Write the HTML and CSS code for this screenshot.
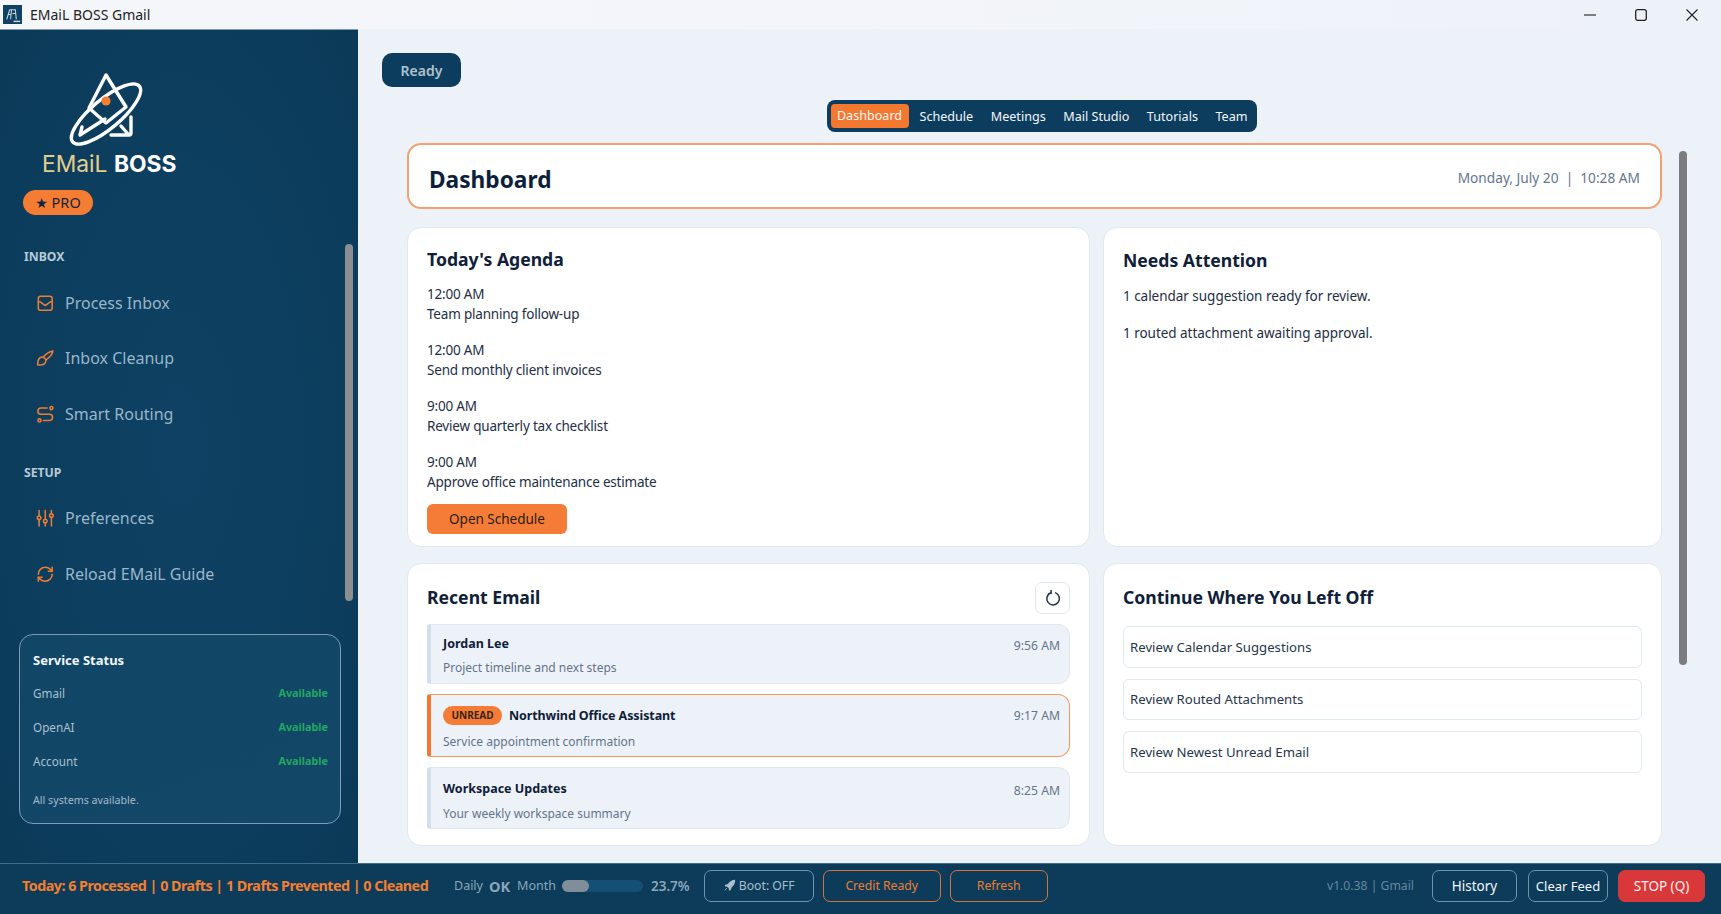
FILE: index.html
```html
<!DOCTYPE html>
<html lang="en">
<head>
<meta charset="utf-8">
<title>EMaiL BOSS Gmail</title>
<link rel="stylesheet" href="styles.css">
</head>
<body>
<header class="titlebar">
  <svg class="app-icon" viewBox="0 0 20 20"><rect width="20" height="20" fill="#0f4364"/><path d="M7 5 4 15M9 5l-1 10M7 5h6l1 10M10 9h3M5 10h4" fill="none" stroke="#c9d6df" stroke-width="1.1"/><rect x="11" y="16.5" width="7" height="1.5" fill="#c9d6df"/></svg>
  <span class="app-title">EMaiL BOSS Gmail</span>
  <div class="win-controls">
    <svg viewBox="0 0 12 12"><path d="M0 6h12" stroke="#333" stroke-width="1.2"/></svg>
    <svg viewBox="0 0 12 12"><rect x=".7" y=".7" width="10.6" height="10.6" rx="2" fill="none" stroke="#222" stroke-width="1.3"/></svg>
    <svg viewBox="0 0 12 12"><path d="M.5.5l11 11M11.5.5l-11 11" stroke="#222" stroke-width="1.1"/></svg>
  </div>
</header>

<div class="app">
  <aside class="sidebar">
    <div class="brand">
      <svg class="logo" viewBox="0 0 90 78" fill="none" stroke="#fff" stroke-width="3.4" stroke-linejoin="round" stroke-linecap="round">
        <path d="M47 3 30 36 47 51 67 35Z"/>
        <ellipse cx="47" cy="42" rx="43.5" ry="14.5" transform="rotate(-40 47 42)"/>
        <path d="M72 45v16a2 2 0 0 1-2 2H52M62 54l7 8M21 63 46 47M21 63l2-8"/>
        <circle cx="47" cy="29" r="4.6" fill="#f47f2f" stroke="none"/>
      </svg>
      <div class="wordmark"><span class="gold">EMaiL</span> <b>BOSS</b></div>
      <div class="pro"><span class="star">★</span> PRO</div>
    </div>

    <div class="group-label group-inbox">INBOX</div>
    <a class="nav-item"><svg viewBox="0 0 24 24"><rect x="3" y="3" width="18" height="18" rx="3"/><path d="M3 10h2l7 5 7-5h2"/></svg>Process Inbox</a>
    <a class="nav-item"><svg viewBox="0 0 24 24"><path d="M22 2.500c-5.500 1-9.500 4-12.500 8l3.500 3.500c4-2.500 8-6 9-11.500Z"/><path d="M9.500 10.500c-3-.5-5.500 1-6.500 4-.5 1.500-.5 3-1 6 3 .5 9 .5 10.500-4 .3-1 .5-1.500.5-2.500"/></svg>Inbox Cleanup</a>
    <a class="nav-item"><svg viewBox="0 0 24 24"><circle cx="4.500" cy="20" r="2"/><path d="M9.500 20h8a4 4 0 0 0 0-8h-11a4 4 0 0 1 0-8h8"/><circle cx="20" cy="4" r="2"/></svg>Smart Routing</a>

    <div class="group-label group-setup">SETUP</div>
    <a class="nav-item"><svg viewBox="0 0 24 24"><path d="M4 2v7M4 14v8M12 2v11M12 18v4M20 2v4M20 11v11"/><circle cx="4" cy="11.500" r="2.300"/><circle cx="12" cy="15.500" r="2.300"/><circle cx="20" cy="8.500" r="2.300"/></svg>Preferences</a>
    <a class="nav-item"><svg viewBox="0 0 24 24"><path d="M3 12a9 9 0 0 1 9-9 9.750 9.750 0 0 1 6.740 2.740L21 8"/><path d="M21 3v5h-5"/><path d="M21 12a9 9 0 0 1-9 9 9.750 9.750 0 0 1-6.740-2.740L3 16"/><path d="M8 16H3v5"/></svg>Reload EMaiL Guide</a>

    <section class="status">
      <h3>Service Status</h3>
      <div class="status-row"><span>Gmail</span><b>Available</b></div>
      <div class="status-row"><span>OpenAI</span><b>Available</b></div>
      <div class="status-row"><span>Account</span><b>Available</b></div>
      <p>All systems available.</p>
    </section>
    <div class="side-thumb"></div>
  </aside>

  <main class="main">
    <div class="ready">Ready</div>
    <div class="tabs-wrap">
      <nav class="tabs">
        <span class="tab active">Dashboard</span>
        <span class="tab">Schedule</span>
        <span class="tab">Meetings</span>
        <span class="tab">Mail Studio</span>
        <span class="tab">Tutorials</span>
        <span class="tab">Team</span>
      </nav>
    </div>

    <section class="page-head">
      <h1>Dashboard</h1>
      <span class="date">Monday, July 20 &nbsp;|&nbsp; 10:28 AM</span>
    </section>

    <div class="grid">
      <section class="card">
        <h2 class="agenda-title">Today's Agenda</h2>
        <div class="agenda-item"><div>12:00 AM</div><div>Team planning follow-up</div></div>
        <div class="agenda-item"><div>12:00 AM</div><div>Send monthly client invoices</div></div>
        <div class="agenda-item"><div>9:00 AM</div><div>Review quarterly tax checklist</div></div>
        <div class="agenda-item"><div>9:00 AM</div><div>Approve office maintenance estimate</div></div>
        <button class="open-btn">Open Schedule</button>
      </section>

      <section class="card">
        <h2 class="attention-title">Needs Attention</h2>
        <p class="note">1 calendar suggestion ready for review.</p>
        <p class="note">1 routed attachment awaiting approval.</p>
      </section>

      <section class="card card-mail">
        <div class="card-head">
          <h2>Recent Email</h2>
          <button class="icon-btn"><svg viewBox="0 0 20 20"><path d="M7.500 4.200a7 7 0 1 0 5.500.1M7.800 1.800 8 4.600l-2.800.6" fill="none" stroke="#24344a" stroke-width="1.700" stroke-linecap="round"/></svg></button>
        </div>
        <article class="mail mail-first">
          <div class="mail-top"><b>Jordan Lee</b><time>9:56 AM</time></div>
          <div class="mail-sub">Project timeline and next steps</div>
        </article>
        <article class="mail unread">
          <div class="mail-top"><span class="badge">UNREAD</span><b>Northwind Office Assistant</b><time>9:17 AM</time></div>
          <div class="mail-sub">Service appointment confirmation</div>
        </article>
        <article class="mail mail-last">
          <div class="mail-top"><b>Workspace Updates</b><time>8:25 AM</time></div>
          <div class="mail-sub">Your weekly workspace summary</div>
        </article>
      </section>

      <section class="card card-mail">
        <h2 class="continue-title">Continue Where You Left Off</h2>
        <a class="resume">Review Calendar Suggestions</a>
        <a class="resume">Review Routed Attachments</a>
        <a class="resume">Review Newest Unread Email</a>
      </section>
    </div>
    <div class="main-thumb"></div>
  </main>
</div>

<footer class="footer">
  <strong class="today">Today: 6 Processed | 0 Drafts | 1 Drafts Prevented | 0 Cleaned</strong>
  <span class="muted daily">Daily</span><b class="muted ok">OK</b><span class="muted month">Month</span>
  <div class="bar"><div class="bar-fill" style="width:33%"></div></div>
  <span class="pct">23.7%</span>
  <button class="fbtn boot"><svg viewBox="0 0 16 16"><path d="M15 1c-4 .2-7 2-9 5L3 7l-1 2 3 .5 2 2 .5 3 2-1 1-3c3-2 4.700-5.500 4.500-9.500ZM4 11l-2.500 3.500L5 12Z" fill="#a9bfcd"/></svg>Boot: OFF</button>
  <button class="fbtn credit">Credit Ready</button>
  <button class="fbtn refresh">Refresh</button>
  <span class="version">v1.0.38 | Gmail</span>
  <button class="fbtn history">History</button>
  <button class="fbtn clear">Clear Feed</button>
  <button class="fbtn stop">STOP (Q)</button>
</footer>
</body>
</html>
```
FILE: styles.css
```css
* { box-sizing: border-box; }
html, body { height: 100%; }
body {
  margin: 0;
  height: 914px;
  overflow: hidden;
  display: flex;
  flex-direction: column;
  font-family: "Noto Sans", "Open Sans", sans-serif;
  background: #edf2f8;
  color: #0f2038;
}
h1, h2, h3, p { margin: 0; }
button { font-family: inherit; cursor: pointer; }

/* title bar */
.titlebar {
  height: 29px;
  flex: none;
  display: flex;
  align-items: center;
  padding-left: 3px;
  background: linear-gradient(90deg, #f5f6fa 0%, #f3f5fa 50%, #edf2f8 100%);
}
.app-icon { width: 19px; height: 19px; flex: none; }
.app-title { margin-left: 8px; font-size: 14px; color: #222; }
.win-controls { margin-left: auto; margin-right: 23px; display: flex; gap: 39px; }
.win-controls svg { width: 12px; height: 12px; display: block; }

.app { flex: 1; display: flex; min-height: 0; }

/* sidebar */
.sidebar {
  position: relative;
  width: 358px;
  flex: none;
  display: flex;
  flex-direction: column;
  background: radial-gradient(ellipse at 50% 50%, #0e4163 0%, #0c3d5d 70%, #0b3958 100%);
  border-top: 1px solid #7f98aa;
}
.brand { padding: 42px 0 0 23px; height: 195px; }
.logo { display: block; width: 90px; height: 78px; margin-left: 36px; }
.wordmark { margin: 0 0 0 19px; font-family: Inter, sans-serif; font-size: 22.8px; line-height: 27px; white-space: nowrap; color: #fff; }
.wordmark .gold { color: #e4cd8d; font-weight: 400; }
.wordmark b { font-weight: 700; }
.pro {
  width: 70px;
  height: 25px;
  margin-top: 13px;
  border-radius: 13px;
  background: #f47c33;
  color: #14233f;
  font-size: 14.5px;
  line-height: 25px;
  text-align: center;
}
.star { font-family: "DejaVu Sans", sans-serif; font-size: 14px; }
.group-label { margin-left: 24px; font-size: 12.200px; font-weight: 700; line-height: 16px; color: #b6cbd8; }
.group-inbox { margin-top: 24px; margin-bottom: 10px; }
.group-setup { margin-top: 23px; margin-bottom: 10px; }
.nav-item {
  height: 55.500px;
  display: flex;
  align-items: center;
  gap: 10.500px;
  padding-left: 36px;
  font-size: 16px;
  color: #9ab6c9;
}
.nav-item svg {
  width: 18.500px;
  height: 18.500px;
  fill: none;
  stroke: #ee7c30;
  stroke-width: 2;
  stroke-linecap: round;
  stroke-linejoin: round;
  flex: none;
}
.status {
  margin: auto 17px 39px 19px;
  height: 190px;
  padding: 15px 12px 0 13px;
  border: 1.500px solid #7c9cb2;
  border-radius: 14px;
  background: linear-gradient(160deg, #114667, #134768);
}
.status h3 { font-size: 13px; font-weight: 700; line-height: 20px; color: #f2f6f9; margin-bottom: 13px; }
.status-row { display: flex; justify-content: space-between; height: 34px; font-size: 11.700px; line-height: 20px; color: #a9c0ce; }
.status-row b { color: #22a860; font-size: 10.800px; font-weight: 700; }
.status p { margin-top: 5px; font-size: 10.700px; line-height: 20px; color: #a3bac9; }
.side-thumb { position: absolute; left: 345px; top: 214px; width: 8px; height: 357px; border-radius: 4px; background: #8b8f92; }

/* main */
.main { position: relative; flex: 1; min-width: 0; padding: 24px 0 0 24px; }
.ready {
  width: 79px;
  height: 34px;
  border-radius: 10px;
  background: #0d3d5e;
  color: #abc3d2;
  font-size: 14px;
  font-weight: 600;
  line-height: 35px;
  text-align: center;
}
.tabs-wrap { display: flex; justify-content: center; margin-top: 13px; padding-right: 20px; }
.tabs {
  height: 32px;
  width: 430px;
  display: flex;
  align-items: center;
  gap: 17.500px;
  padding: 0 4px;
  border-radius: 8px;
  background: #0d3d5e;
}
.tab { font-size: 12.600px; color: #f2f6fa; white-space: nowrap; }
.tab.active { width: 78px; height: 24px; margin-right: -6.500px; line-height: 24px; text-align: center; border-radius: 4px; background: #f4782f; }
.page-head {
  width: 1255px;
  height: 66px;
  margin: 11px 0 0 25px;
  padding: 3px 20px 0 20px;
  display: flex;
  align-items: center;
  justify-content: space-between;
  background: #fff;
  border: 2px solid #f6a072;
  border-radius: 14px;
}
.page-head h1 { margin-top: 4px; font-size: 22.700px; font-weight: 700; color: #0d1f3a; }
.date { font-size: 13.700px; color: #64768f; }
.grid {
  width: 1255px;
  margin: 18px 0 0 25px;
  display: grid;
  grid-template-columns: 683px 559px;
  grid-template-rows: 320px 283px;
  column-gap: 13px;
  row-gap: 16px;
}
.card {
  background: #fff;
  border: 1px solid #dfe8f1;
  border-radius: 14px;
  padding: 19px 19px 0;
}
.card h2 { font-size: 17.600px; font-weight: 700; line-height: 25px; color: #0f2039; }
.agenda-title { margin-bottom: 13px; }
.agenda-item { font-size: 13.500px; line-height: 19.500px; letter-spacing: -.2px; color: #1e2e45; margin-bottom: 17px; white-space: nowrap; }
.open-btn {
  display: block;
  width: 140px;
  height: 30px;
  margin-top: -5px;
  border: 0;
  border-radius: 6px;
  background: #f47c36;
  color: #2a1c16;
  font-size: 13.500px;
}
.attention-title { margin: 1px 0 13px; }
.note { font-size: 13.500px; line-height: 20px; letter-spacing: -.03px; color: #1e2e45; margin-bottom: 17px; }
.card-mail { padding-top: 18px; }
.card-head { display: flex; justify-content: space-between; align-items: flex-start; height: 42px; }
.card-head h2 { margin-top: 3px; }
.icon-btn {
  width: 35px;
  height: 32px;
  padding: 0;
  display: flex;
  align-items: center;
  justify-content: center;
  background: #fff;
  border: 1px solid #e0e8f1;
  border-radius: 7px;
}
.icon-btn svg { width: 18px; height: 18px; }
.mail {
  height: 62px;
  margin-bottom: 10px;
  padding: 9px 9px 0 12px;
  background: #edf2f8;
  border: 1px solid #dfe7f0;
  border-left: 4px solid #cfdfeb;
  border-radius: 3px 12px 12px 3px;
}
.mail-first { height: 60px; padding-top: 7px; }
.mail-first .mail-sub { margin-top: 5px; }
.mail.unread { height: 63px; padding-top: 9px; border: 1.500px solid #f6965e; border-left: 4px solid #f4782f; }
.mail-top { display: flex; align-items: center; height: 22px; font-size: 12.500px; white-space: nowrap; color: #0f2039; }
.mail-top b { font-weight: 700; }
.mail-top time { margin-left: auto; font-size: 12.200px; color: #65758b; position: relative; top: 2px; }
.unread .mail-top time { top: 0; }
.unread .mail-top b { letter-spacing: -.1px; }
.badge {
  width: 59px;
  height: 19px;
  margin-right: 7px;
  border-radius: 10px;
  background: #f47c36;
  color: #3a2418;
  font-size: 10px;
  font-weight: 700;
  line-height: 19px;
  text-align: center;
}
.mail-sub { margin-top: 6px; font-size: 12px; line-height: 18px; color: #64748b; white-space: nowrap; }
.unread .mail-sub { margin-top: 7px; }
.continue-title { margin: 3px 0 16px; }
.resume {
  display: flex;
  align-items: center;
  width: 519px;
  height: 41.500px;
  margin-bottom: 11px;
  padding-left: 6px;
  background: #fff;
  border: 1px solid #e1e9f2;
  border-radius: 6px;
  font-size: 13.200px;
  color: #27364c;
}
.main-thumb { position: absolute; left: 1321px; top: 122px; width: 8px; height: 514px; border-radius: 4px; background: #7a7c80; }

/* footer */
.footer {
  height: 51px;
  flex: none;
  display: flex;
  align-items: center;
  padding: 0 16px 7px 22px;
  background: #0d3c5b;
  border-top: 1px solid #3e6d88;
}
.today { width: 432px; font-size: 14.300px; font-weight: 700; letter-spacing: -.5px; color: #f47f2f; white-space: nowrap; }
.muted { font-size: 12.500px; color: #8aa6b8; }
.ok { margin-left: 6px; font-size: 14.500px; font-weight: 700; }
.month { margin-left: 7px; }
.bar { width: 81px; height: 12px; margin-left: 6px; border-radius: 6px; background: #164f75; }
.bar-fill { height: 100%; border-radius: 6px; background: #818e99; }
.pct { margin: 0 14px 0 8px; font-size: 13.500px; font-weight: 600; color: #8aa6b8; }
.fbtn {
  height: 32px;
  padding: 0;
  background: transparent;
  border: 1px solid #6f93a9;
  border-radius: 7px;
  font-size: 12.200px;
  white-space: nowrap;
}
.boot { width: 110px; margin-right: 9px; color: #a9bfcd; display: flex; align-items: center; justify-content: center; gap: 3px; }
.boot svg { width: 13px; height: 13px; }
.credit { width: 118px; margin-right: 9px; color: #ee7d30; border-color: #d8703a; }
.refresh { width: 98px; color: #ee7d30; border-color: #d8703a; }
.version { margin-left: auto; margin-right: 18px; font-size: 12.200px; color: #64879c; }
.history { width: 85px; margin-right: 11px; font-size: 13.500px; color: #f4f7fa; }
.clear { width: 80px; margin-right: 10px; font-size: 13px; color: #f4f7fa; }
.stop { width: 87px; font-size: 13.500px; background: #d9383a; border-color: #d9383a; color: #f8eeee; }
```
